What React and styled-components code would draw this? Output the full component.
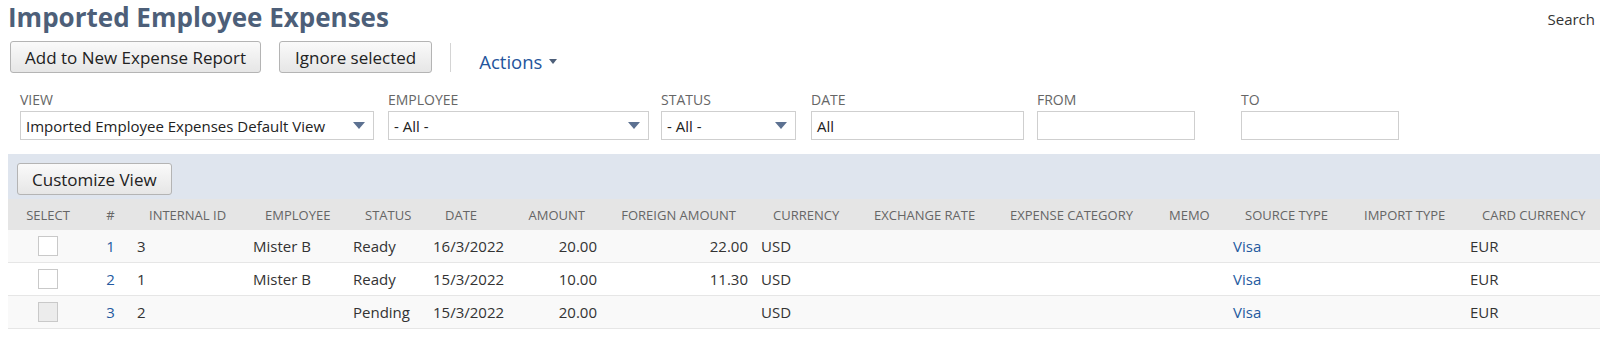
import React from 'react';
import styled, { createGlobalStyle } from 'styled-components';

const GlobalStyle = createGlobalStyle`
  body {
    margin: 0;
    background: #fff;
    font-family: "Open Sans", "Liberation Sans", sans-serif;
    color: #333;
  }
`;

const Page = styled.div`
  width: 1600px;
  height: 340px;
  overflow: hidden;
  padding-left: 8px;
  box-sizing: border-box;
`;

const TitleRow = styled.div`
  display: flex;
  justify-content: space-between;
  align-items: flex-start;
  padding-right: 5px;
`;

const Title = styled.h1`
  margin: 0;
  font-size: 26px;
  line-height: 34px;
  font-weight: 700;
  color: #4d5f79;
`;

const SearchLink = styled.span`
  font-size: 15px;
  line-height: 20px;
  margin-top: 9px;
  color: #333;
`;

const ButtonBar = styled.div`
  display: flex;
  align-items: center;
  gap: 18px;
  height: 32px;
  margin-top: 7px;
  padding-left: 2px;
`;

const Button = styled.button`
  height: 32px;
  padding: 0 ${(p) => p.$pad || 14}px;
  border: 1px solid #b4b4b4;
  border-radius: 3px;
  background: linear-gradient(#fafafa, #e6e6e6);
  font-family: inherit;
  font-size: 17px;
  color: #222;
  cursor: pointer;
`;

const Divider = styled.div`
  width: 1px;
  height: 29px;
  background: #d4d4d4;
`;

const ActionsMenu = styled.span`
  display: flex;
  align-items: center;
  gap: 7px;
  margin-left: 10px;
  margin-top: 9px;
  font-size: 18.5px;
  line-height: 24px;
  color: #24559c;
  cursor: pointer;
`;

const Caret = styled.span`
  width: 0;
  height: 0;
  border-left: 4.5px solid transparent;
  border-right: 4.5px solid transparent;
  border-top: 5px solid #4d5f79;
`;

const Filters = styled.div`
  display: flex;
  gap: 12px;
  margin-top: 19px;
  padding-left: 12px;
`;

const Field = styled.div`
  display: flex;
  flex-direction: column;
  width: ${(p) => p.$w}px;
  margin-left: ${(p) => p.$ml || 0}px;
`;

const Label = styled.span`
  font-size: 14px;
  line-height: 16px;
  color: #666;
  text-transform: uppercase;
`;

const Control = styled.div`
  height: 29px;
  margin-top: 3px;
  border: 1px solid #cfcfcf;
  box-sizing: border-box;
  background: #fff;
  padding: 0 5px;
  display: flex;
  align-items: center;
  font-size: 15px;
  color: #222;
`;

const SelectArrow = styled.span`
  margin-left: auto;
  margin-right: 3px;
  width: 0;
  height: 0;
  border-left: 6px solid transparent;
  border-right: 6px solid transparent;
  border-top: 7px solid #5c7191;
`;

const Band = styled.div`
  margin-top: 14px;
  background: #dfe5ee;
  padding: 9px 0 4px 9px;
`;

const COLS = '80px 45px 116px 100px 80px 87px 90px 151px 101px 136px 159px 76px 119px 118px 134px';

const HeaderRow = styled.div`
  display: grid;
  grid-template-columns: ${COLS};
  height: 31px;
  background: #e5e5e5;
  align-items: center;
`;

const HeadCell = styled.div`
  font-size: 13px;
  color: #666;
  text-transform: uppercase;
  white-space: nowrap;
  text-align: ${(p) => p.$align};
  padding: ${(p) => (p.$align === 'right' ? '0 21px 0 0' : p.$align === 'center' ? '0' : '0 0 0 16px')};
`;

const DataRow = styled.div`
  display: grid;
  grid-template-columns: ${COLS};
  height: 33px;
  box-sizing: border-box;
  align-items: center;
  background: ${(p) => (p.$odd ? '#f9f9f9' : '#fff')};
  border-bottom: 1px solid #e6e6e6;
`;

const Cell = styled.div`
  font-size: 15px;
  color: #333;
  white-space: nowrap;
  display: flex;
  justify-content: ${(p) => (p.$align === 'right' ? 'flex-end' : p.$align === 'center' ? 'center' : 'flex-start')};
  padding: ${(p) => (p.$align === 'right' ? '0 9px 0 0' : p.$align === 'center' ? '0' : '0 0 0 4px')};
`;

const Link = styled.span`
  color: #255aa0;
`;

const Checkbox = styled.span`
  width: 20px;
  height: 20px;
  box-sizing: border-box;
  border: 1px solid #c9c9c9;
  background: ${(p) => (p.$disabled ? '#ececec' : '#fff')};
`;

const columns = [
  { label: 'Select', align: 'center' },
  { label: '#', align: 'center' },
  { label: 'Internal ID', align: 'left' },
  { label: 'Employee', align: 'left' },
  { label: 'Status', align: 'left' },
  { label: 'Date', align: 'left' },
  { label: 'Amount', align: 'right' },
  { label: 'Foreign Amount', align: 'right' },
  { label: 'Currency', align: 'left' },
  { label: 'Exchange Rate', align: 'left' },
  { label: 'Expense Category', align: 'left' },
  { label: 'Memo', align: 'left' },
  { label: 'Source Type', align: 'left' },
  { label: 'Import Type', align: 'left' },
  { label: 'Card Currency', align: 'left' },
];

const rows = [
  { n: 1, id: 3, emp: 'Mister B', status: 'Ready', date: '16/3/2022', amount: '20.00', foreign: '22.00', disabled: false },
  { n: 2, id: 1, emp: 'Mister B', status: 'Ready', date: '15/3/2022', amount: '10.00', foreign: '11.30', disabled: false },
  { n: 3, id: 2, emp: '', status: 'Pending', date: '15/3/2022', amount: '20.00', foreign: '', disabled: true },
];

export default function App() {
  return (
    <Page>
      <GlobalStyle />
      <TitleRow>
        <Title>Imported Employee Expenses</Title>
        <SearchLink>Search</SearchLink>
      </TitleRow>

      <ButtonBar>
        <Button>Add to New Expense Report</Button>
        <Button $pad={15}>Ignore selected</Button>
        <Divider />
        <ActionsMenu>
          Actions <Caret />
        </ActionsMenu>
      </ButtonBar>

      <Filters>
        <Field $w={354}>
          <Label>View</Label>
          <Control>
            Imported Employee Expenses Default View
            <SelectArrow />
          </Control>
        </Field>
        <Field $w={261} $ml={2}>
          <Label>Employee</Label>
          <Control>
            - All -
            <SelectArrow />
          </Control>
        </Field>
        <Field $w={135}>
          <Label>Status</Label>
          <Control>
            - All -
            <SelectArrow />
          </Control>
        </Field>
        <Field $w={213} $ml={3}>
          <Label>Date</Label>
          <Control>All</Control>
        </Field>
        <Field $w={158} $ml={1}>
          <Label>From</Label>
          <Control />
        </Field>
        <Field $w={158} $ml={34}>
          <Label>To</Label>
          <Control />
        </Field>
      </Filters>

      <Band>
        <Button>Customize View</Button>
      </Band>

      <HeaderRow>
        {columns.map((c) => (
          <HeadCell key={c.label} $align={c.align}>
            {c.label}
          </HeadCell>
        ))}
      </HeaderRow>

      {rows.map((r, i) => (
        <DataRow key={r.n} $odd={i % 2 === 0}>
          <Cell $align="center">
            <Checkbox $disabled={r.disabled} />
          </Cell>
          <Cell $align="center">
            <Link>{r.n}</Link>
          </Cell>
          <Cell>{r.id}</Cell>
          <Cell>{r.emp}</Cell>
          <Cell>{r.status}</Cell>
          <Cell>{r.date}</Cell>
          <Cell $align="right">{r.amount}</Cell>
          <Cell $align="right">{r.foreign}</Cell>
          <Cell>USD</Cell>
          <Cell />
          <Cell />
          <Cell />
          <Cell>
            <Link>Visa</Link>
          </Cell>
          <Cell />
          <Cell>EUR</Cell>
        </DataRow>
      ))}
    </Page>
  );
}
